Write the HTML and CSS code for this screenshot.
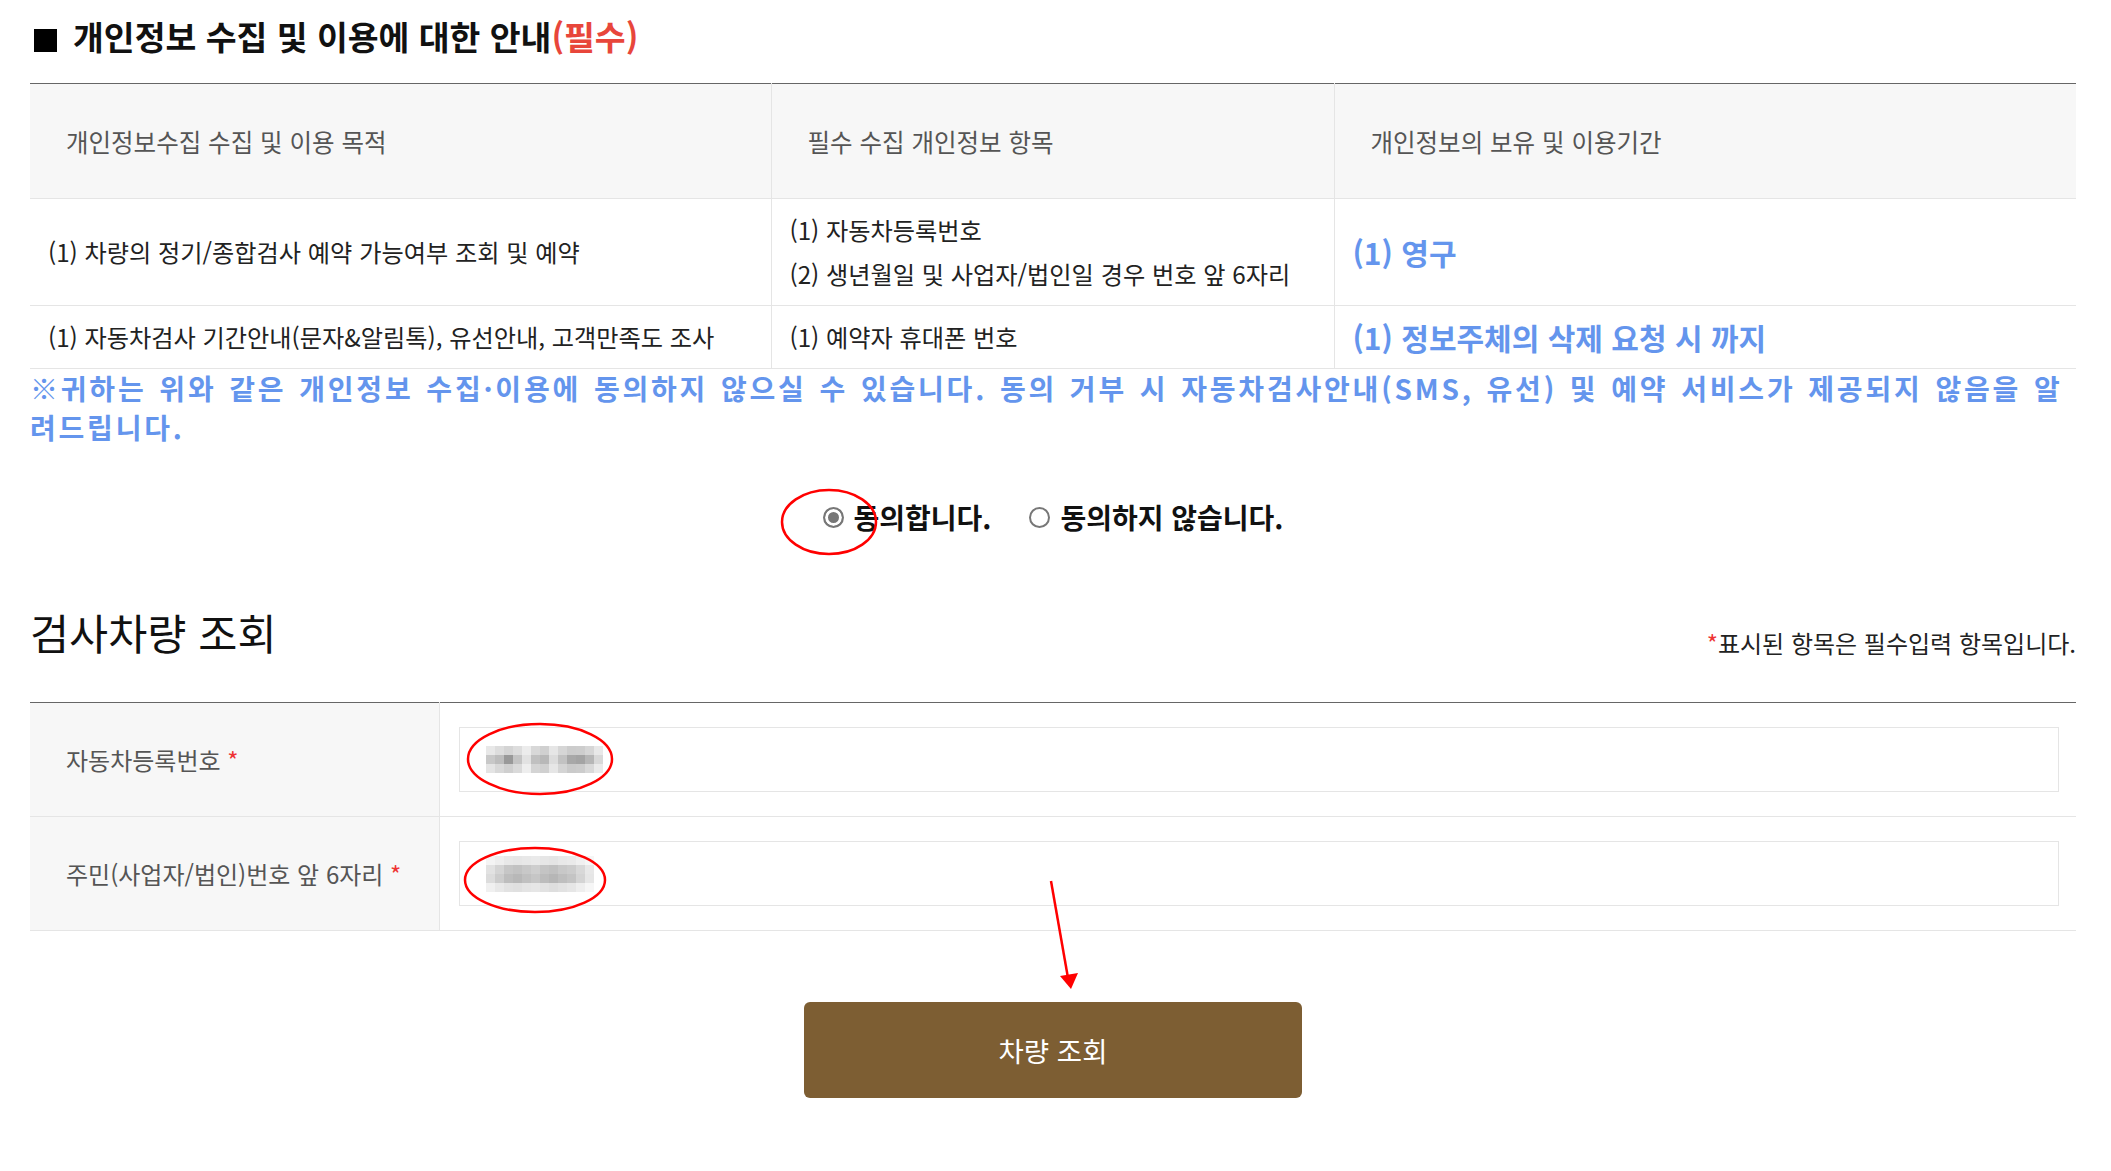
FILE: index.html
```html
<!DOCTYPE html>
<html lang="ko">
<head>
  <meta charset="utf-8">
  <title>검사차량 조회</title>
  <link rel="stylesheet" href="styles.css">
</head>
<body>

<div class="wrap">
  <h2 class="title"><span class="sq"></span>개인정보 수집 및 이용에 대한 안내<span class="req">(필수)</span></h2>

  <table class="privacy">
    <colgroup><col class="c1"><col class="c2"><col class="c3"></colgroup>
    <thead>
      <tr>
        <th>개인정보수집 수집 및 이용 목적</th>
        <th>필수 수집 개인정보 항목</th>
        <th>개인정보의 보유 및 이용기간</th>
      </tr>
    </thead>
    <tbody>
      <tr>
        <td>(1) 차량의 정기/종합검사 예약 가능여부 조회 및 예약</td>
        <td>(1) 자동차등록번호<br>(2) 생년월일 및 사업자/법인일 경우 번호 앞 6자리</td>
        <td class="period">(1) 영구</td>
      </tr>
      <tr>
        <td>(1) 자동차검사 기간안내(문자&amp;알림톡), 유선안내, 고객만족도 조사</td>
        <td>(1) 예약자 휴대폰 번호</td>
        <td class="period">(1) 정보주체의 삭제 요청 시 까지</td>
      </tr>
    </tbody>
  </table>

  <p class="notice">※귀하는 위와 같은 개인정보 수집·이용에 동의하지 않으실 수 있습니다. 동의 거부 시 자동차검사안내(SMS, 유선) 및 예약 서비스가 제공되지 않음을 알려드립니다.</p>

  <div class="agree">
    <label class="radio"><input type="radio" name="agree" checked>동의합니다.</label>
    <label class="radio"><input type="radio" name="agree">동의하지 않습니다.</label>
  </div>

  <div class="search-head">
    <h3>검사차량 조회</h3>
    <span class="note"><em>*</em>표시된 항목은 필수입력 항목입니다.</span>
  </div>

  <table class="form">
    <colgroup><col class="label-col"><col></colgroup>
    <tr>
      <th>자동차등록번호 <em>*</em></th>
      <td>
        <div class="field">
          <!-- blurred car number -->
          <svg class="blur" width="117" height="27" viewBox="0 0 117 27">
            <g>
              <rect x="0" y="0" width="9" height="9" fill="#e8e8e8"/><rect x="9" y="0" width="9" height="9" fill="#dddddd"/><rect x="18" y="0" width="9" height="9" fill="#d4d4d4"/><rect x="27" y="0" width="9" height="9" fill="#dddddd"/><rect x="36" y="0" width="9" height="9" fill="#ececec"/><rect x="45" y="0" width="9" height="9" fill="#d8d8d8"/><rect x="54" y="0" width="9" height="9" fill="#d0d0d0"/><rect x="63" y="0" width="9" height="9" fill="#e6e6e6"/><rect x="72" y="0" width="9" height="9" fill="#d6d6d6"/><rect x="81" y="0" width="9" height="9" fill="#cccccc"/><rect x="90" y="0" width="9" height="9" fill="#cdcdcd"/><rect x="99" y="0" width="9" height="9" fill="#d6d6d6"/><rect x="108" y="0" width="9" height="9" fill="#e8e8e8"/>
              <rect x="0" y="9" width="9" height="9" fill="#c8c8c8"/><rect x="9" y="9" width="9" height="9" fill="#bdbdbd"/><rect x="18" y="9" width="9" height="9" fill="#999999"/><rect x="27" y="9" width="9" height="9" fill="#c4c4c4"/><rect x="36" y="9" width="9" height="9" fill="#e2e2e2"/><rect x="45" y="9" width="9" height="9" fill="#c0c0c0"/><rect x="54" y="9" width="9" height="9" fill="#b8b8b8"/><rect x="63" y="9" width="9" height="9" fill="#dcdcdc"/><rect x="72" y="9" width="9" height="9" fill="#c2c2c2"/><rect x="81" y="9" width="9" height="9" fill="#a8a8a8"/><rect x="90" y="9" width="9" height="9" fill="#a4a4a4"/><rect x="99" y="9" width="9" height="9" fill="#b6b6b6"/><rect x="108" y="9" width="9" height="9" fill="#d8d8d8"/>
              <rect x="0" y="18" width="9" height="9" fill="#e4e4e4"/><rect x="9" y="18" width="9" height="9" fill="#d8d8d8"/><rect x="18" y="18" width="9" height="9" fill="#cfcfcf"/><rect x="27" y="18" width="9" height="9" fill="#dadada"/><rect x="36" y="18" width="9" height="9" fill="#eeeeee"/><rect x="45" y="18" width="9" height="9" fill="#d4d4d4"/><rect x="54" y="18" width="9" height="9" fill="#d0d0d0"/><rect x="63" y="18" width="9" height="9" fill="#e6e6e6"/><rect x="72" y="18" width="9" height="9" fill="#d4d4d4"/><rect x="81" y="18" width="9" height="9" fill="#cacaca"/><rect x="90" y="18" width="9" height="9" fill="#cccccc"/><rect x="99" y="18" width="9" height="9" fill="#d8d8d8"/><rect x="108" y="18" width="9" height="9" fill="#eaeaea"/>
            </g>
          </svg>
        </div>
      </td>
    </tr>
    <tr>
      <th>주민(사업자/법인)번호 앞 6자리 <em>*</em></th>
      <td>
        <div class="field">
          <!-- blurred birth date -->
          <svg class="blur" width="108" height="36" viewBox="0 0 108 36">
            <g>
              <rect x="0" y="0" width="9" height="9" fill="#f4f4f4"/><rect x="9" y="0" width="9" height="9" fill="#eeeeee"/><rect x="18" y="0" width="9" height="9" fill="#e8e8e8"/><rect x="27" y="0" width="9" height="9" fill="#e6e6e6"/><rect x="36" y="0" width="9" height="9" fill="#e8e8e8"/><rect x="45" y="0" width="9" height="9" fill="#eaeaea"/><rect x="54" y="0" width="9" height="9" fill="#e6e6e6"/><rect x="63" y="0" width="9" height="9" fill="#e4e4e4"/><rect x="72" y="0" width="9" height="9" fill="#e8e8e8"/><rect x="81" y="0" width="9" height="9" fill="#eaeaea"/><rect x="90" y="0" width="9" height="9" fill="#f0f0f0"/><rect x="99" y="0" width="9" height="9" fill="#f6f6f6"/>
              <rect x="0" y="9" width="9" height="9" fill="#e2e2e2"/><rect x="9" y="9" width="9" height="9" fill="#d4d4d4"/><rect x="18" y="9" width="9" height="9" fill="#c6c6c6"/><rect x="27" y="9" width="9" height="9" fill="#c2c2c2"/><rect x="36" y="9" width="9" height="9" fill="#c8c8c8"/><rect x="45" y="9" width="9" height="9" fill="#cecece"/><rect x="54" y="9" width="9" height="9" fill="#c4c4c4"/><rect x="63" y="9" width="9" height="9" fill="#c0c0c0"/><rect x="72" y="9" width="9" height="9" fill="#c8c8c8"/><rect x="81" y="9" width="9" height="9" fill="#cccccc"/><rect x="90" y="9" width="9" height="9" fill="#d8d8d8"/><rect x="99" y="9" width="9" height="9" fill="#e8e8e8"/>
              <rect x="0" y="18" width="9" height="9" fill="#dcdcdc"/><rect x="9" y="18" width="9" height="9" fill="#cccccc"/><rect x="18" y="18" width="9" height="9" fill="#bdbdbd"/><rect x="27" y="18" width="9" height="9" fill="#b8b8b8"/><rect x="36" y="18" width="9" height="9" fill="#c0c0c0"/><rect x="45" y="18" width="9" height="9" fill="#c6c6c6"/><rect x="54" y="18" width="9" height="9" fill="#bcbcbc"/><rect x="63" y="18" width="9" height="9" fill="#b6b6b6"/><rect x="72" y="18" width="9" height="9" fill="#bebebe"/><rect x="81" y="18" width="9" height="9" fill="#c4c4c4"/><rect x="90" y="18" width="9" height="9" fill="#d4d4d4"/><rect x="99" y="18" width="9" height="9" fill="#e6e6e6"/>
              <rect x="0" y="27" width="9" height="9" fill="#f0f0f0"/><rect x="9" y="27" width="9" height="9" fill="#e8e8e8"/><rect x="18" y="27" width="9" height="9" fill="#e2e2e2"/><rect x="27" y="27" width="9" height="9" fill="#e0e0e0"/><rect x="36" y="27" width="9" height="9" fill="#e4e4e4"/><rect x="45" y="27" width="9" height="9" fill="#e6e6e6"/><rect x="54" y="27" width="9" height="9" fill="#e2e2e2"/><rect x="63" y="27" width="9" height="9" fill="#dedede"/><rect x="72" y="27" width="9" height="9" fill="#e2e2e2"/><rect x="81" y="27" width="9" height="9" fill="#e6e6e6"/><rect x="90" y="27" width="9" height="9" fill="#eeeeee"/><rect x="99" y="27" width="9" height="9" fill="#f6f6f6"/>
            </g>
          </svg>
        </div>
      </td>
    </tr>
  </table>

  <div class="btn-wrap">
    <button class="btn" type="button">차량 조회</button>
  </div>
</div>

<!-- red marks drawn on top of the capture -->
<svg class="marks" width="2111" height="1171" viewBox="0 0 2111 1171">
  <ellipse cx="829" cy="522" rx="47" ry="32" fill="none" stroke="#ff0000" stroke-width="2.5"/>
  <ellipse cx="540" cy="759" rx="72" ry="35" fill="none" stroke="#ff0000" stroke-width="2.5"/>
  <ellipse cx="535" cy="880" rx="70" ry="32" fill="none" stroke="#ff0000" stroke-width="2.5"/>
  <line x1="1051" y1="881" x2="1068" y2="978" stroke="#ff0000" stroke-width="2.5"/>
  <polygon points="1060,976 1078,973 1071,989" fill="#ff0000"/>
</svg>

</body>
</html>
```

FILE: styles.css
```css
body { margin: 0; font-family: "Noto Sans CJK KR", "Malgun Gothic", sans-serif; color: #222; background: #fff; position: relative; }
.wrap { width: 2046px; margin-left: 30px; padding-top: 14px; padding-bottom: 60px; }

.title { margin: 0; font-size: 33.5px; line-height: 44px; font-weight: bold; color: #111; }
.title .sq { display: inline-block; width: 23px; height: 23px; background: #000; margin: 0 16px 0 4px; vertical-align: -2px; }
.title .req { color: #e8463b; }

.privacy, .form { width: 100%; border-collapse: collapse; table-layout: fixed; border-top: 1px solid #666; }
.privacy { margin-top: 25px; }
.privacy .c1 { width: 741px; }
.privacy .c2 { width: 563px; }
.privacy .c3 { width: 742px; }
.privacy th { height: 114px; padding: 0 36px; background: #f7f7f7; color: #555; font-size: 24.5px; font-weight: normal; text-align: left; }
.privacy td { padding: 9px 18px; font-size: 24.2px; line-height: 44px; color: #222; }
.privacy th, .privacy td { border-bottom: 1px solid #e5e5e5; border-left: 1px solid #e5e5e5; }
.privacy th:first-child, .privacy td:first-child { border-left: 0; }
.privacy td.period { color: #6495ed; font-size: 30px; font-weight: bold; }

.notice { margin: 0; color: #6495ed; font-size: 28px; font-weight: bold; line-height: 39px; letter-spacing: 2.8px; word-spacing: 2.2px; }

.agree { display: flex; justify-content: center; gap: 38px; margin-top: 50px; font-size: 28px; font-weight: bold; line-height: 40px; color: #111; }
.radio { display: flex; align-items: center; gap: 10px; cursor: pointer; }
.radio input { appearance: none; margin: 0; width: 21px; height: 21px; border: 2px solid #777; border-radius: 50%; background: #fff; }
.radio input:checked { background: #777; box-shadow: inset 0 0 0 3px #fff; }

.search-head { display: flex; justify-content: space-between; align-items: flex-end; margin-top: 67px; }
.search-head h3 { margin: 0; font-size: 42.5px; font-weight: normal; line-height: 56px; color: #111; }
.search-head .note { font-size: 24px; line-height: 34px; color: #222; }
em { font-style: normal; color: #e33; }

.form { margin-top: 42px; }
.form .label-col { width: 409px; }
.form th { padding: 0 36px; background: #f7f7f7; color: #555; font-size: 24px; font-weight: normal; text-align: left; border-right: 1px solid #e5e5e5; }
.form td { padding: 24px 17px 24px 19px; }
.form th, .form td { border-bottom: 1px solid #e5e5e5; }
.field { height: 63px; border: 1px solid #e5e5e5; display: flex; align-items: center; padding-left: 26px; }

.btn-wrap { text-align: center; margin-top: 71px; }
.btn { width: 498px; height: 96px; background: #7d5e33; color: #fff; border: 0; border-radius: 6px; font-family: inherit; font-size: 27.5px; cursor: pointer; }

.marks { position: absolute; top: 0; left: 0; pointer-events: none; }
```
